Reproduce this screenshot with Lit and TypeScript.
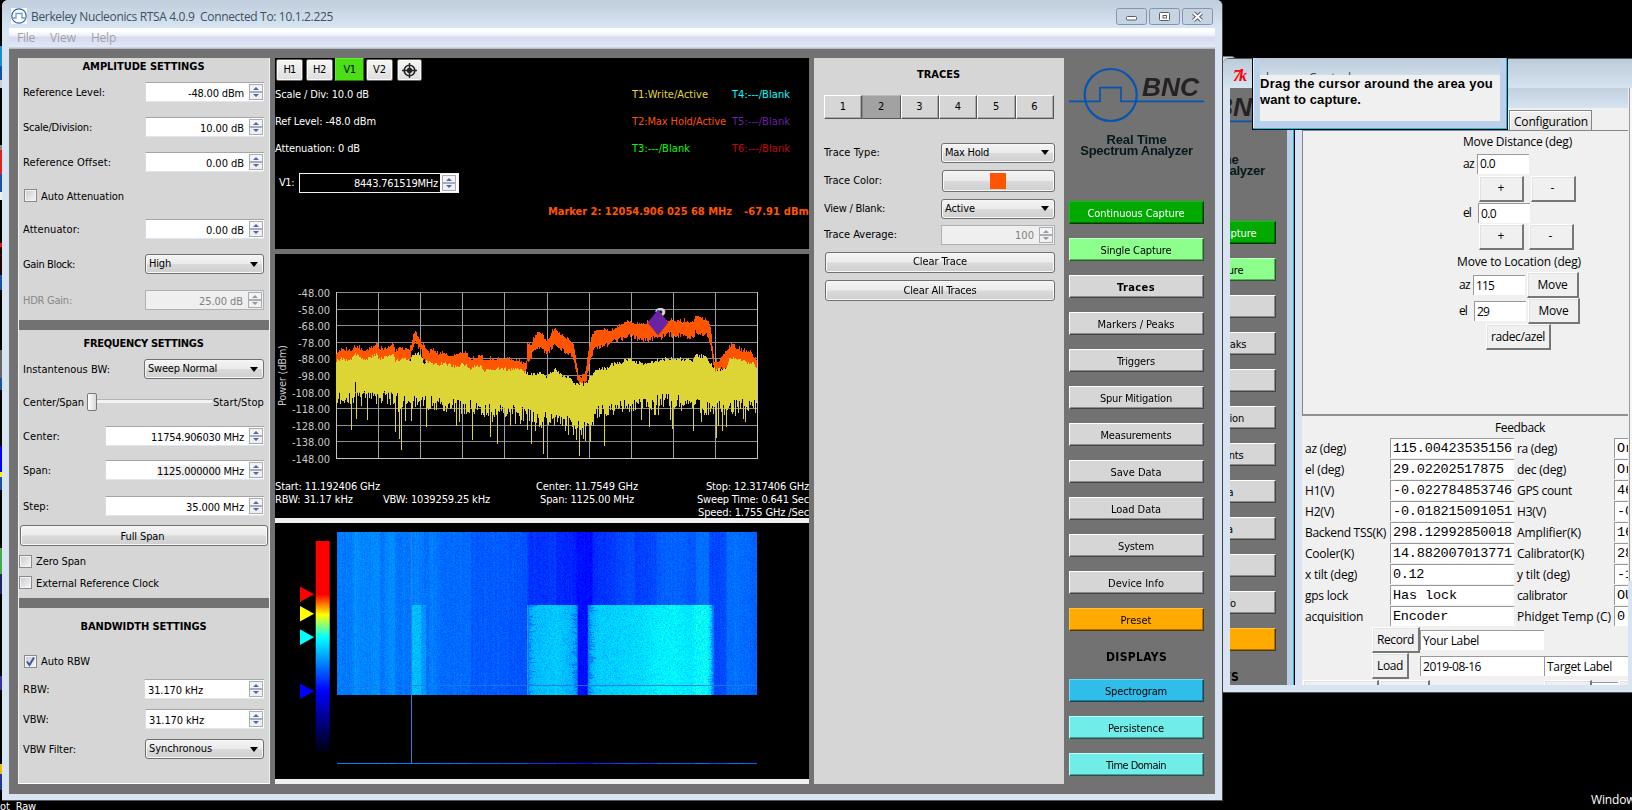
import { LitElement, html, css, svg, nothing } from "lit";
import { customElement } from "lit/decorators.js";

/* ---------- text helpers ---------- */

const FONTS: Record<string, string> = {
  ui: '11px "DejaVu Sans Condensed", "DejaVu Sans", sans-serif',
  uib: 'bold 11px "DejaVu Sans Condensed", "DejaVu Sans", sans-serif',
  cap12: 'bold 12px "DejaVu Sans Condensed", "DejaVu Sans", sans-serif',
  seg: '12px "Open Sans", sans-serif',
  mono: '13.5px "Liberation Mono", monospace',
  ari: 'bold 13px "Liberation Sans", sans-serif',
};
const ctx = document.createElement("canvas").getContext("2d")!;
const spacing = (text: string, w: number, font: string) => {
  ctx.font = FONTS[font];
  return ((w - ctx.measureText(text).width) / text.length).toFixed(3);
};
const t = (text: string, w: number, font = "ui", cls = "") =>
  html`<span class="t ${font} ${cls}" style="letter-spacing:${spacing(text, w, font)}px">${text}</span>`;

const shared = css`
  * { box-sizing: border-box; }
  .t { white-space: pre; line-height: 14px; flex: none; }
  .ui { font: 11px "DejaVu Sans Condensed", "DejaVu Sans", sans-serif; line-height: 14px; }
  .uib { font: bold 11px "DejaVu Sans Condensed", "DejaVu Sans", sans-serif; line-height: 14px; }
  .cap12 { font: bold 12px "DejaVu Sans Condensed", "DejaVu Sans", sans-serif; line-height: 14px; }
  .seg { font: 12px "Open Sans", sans-serif; line-height: 14px; }
  .mono { font: 13.5px "Liberation Mono", monospace; line-height: 14px; }
  .ari { font: bold 13px "Liberation Sans", sans-serif; line-height: 14px; }
`;

/* ---------- deterministic noise ---------- */

const rng = (seed: number) => () => {
  seed = (seed * 1664525 + 1013904223) >>> 0;
  return seed / 4294967296;
};
const lerp = (pts: number[], x: number) => {
  if (x <= pts[0]) return pts[1];
  for (let i = 2; i < pts.length; i += 2)
    if (x <= pts[i]) {
      const f = (x - pts[i - 2]) / (pts[i] - pts[i - 2]);
      return pts[i - 1] + f * (pts[i + 1] - pts[i - 1]);
    }
  return pts[pts.length - 1];
};
/* envelopes use a fine frequency axis (2.851 units per pixel) and 3 level units per pixel */
const KX = 2.851;
const maxTop = [189,280,200,268,235,270,240,255,270,272,290,264,306,247,312,268,330,267,350,250,358,274,372,263,398,268,403,252,410,222,415,214,425,235,437,258,447,264,455,277,465,267,480,282,495,276,510,288,530,282,558,275,565,292,580,297,600,284,610,298,640,297,665,295,700,300,725,310,731,306,734,245,745,255,750,235,765,213,780,222,785,242,795,235,805,212,815,206,825,220,840,228,850,237,860,242,868,270,875,312,880,346,890,350,900,338,905,290,912,252,918,225,930,207,950,207,975,210,990,200,1010,186,1030,181,1040,192,1060,188,1090,192,1110,185,1130,180,1150,180,1170,183,1200,186,1208,196,1212,174,1220,164,1235,177,1250,182,1256,198,1260,240,1266,308,1280,302,1290,287,1300,272,1320,250,1330,264,1350,272,1368,272,1380,290,1387,297];
const maxBottom = [189,320,398,310,403,268,415,246,430,266,445,310,470,330,730,340,735,300,745,290,750,265,770,255,790,280,800,265,815,255,835,268,855,278,865,292,870,320,880,362,890,372,900,362,908,330,915,290,925,260,945,256,970,245,1000,233,1030,225,1050,236,1080,238,1100,230,1115,230,1125,220,1160,223,1185,223,1208,233,1212,216,1225,216,1245,223,1255,245,1262,300,1270,322,1290,325,1387,322];
const writeTop = [189,304,200,295,230,299,240,280,255,290,275,299,303,279,312,297,350,280,358,302,380,292,400,302,405,278,430,280,440,310,450,302,480,312,500,308,530,320,555,310,570,325,600,314,610,330,650,326,690,326,725,333,740,345,770,339,785,350,800,337,815,325,830,342,850,350,870,368,900,372,910,358,930,325,960,324,980,310,1000,306,1030,295,1045,307,1080,310,1095,302,1130,294,1180,297,1208,299,1216,283,1240,290,1255,307,1270,330,1300,325,1310,297,1330,292,1350,303,1380,310,1387,322];
const writeBottom = [189,422,300,414,400,428,500,438,600,450,700,460,740,472,780,482,850,485,880,497,915,497,930,460,1000,445,1100,426,1200,434,1260,452,1387,438];
const spikes = [233,510,244,365,277,480,358,515,369,537,374,570,404,482,447,500,531,498,577,540,628,530,648,551,745,551,780,581,883,587,913,545,953,557,1082,500,1148,507,1207,513,1273,533,1290,512,1355,485];

const traces = () => {
  const r = rng(77);
  let hold = "";
  let write = "";
  for (let px = 0; px <= 420; px++) {
    const X = (px + 66.5) * KX;
    const x = px + 61.5;
    const ot = lerp(maxTop, X) - r() * r() * 15 + 4;
    const ob = Math.max(ot + 16, lerp(maxBottom, X) + (r() - 0.3) * 16);
    hold += `M${x} ${Math.round(6 + ot / 3)}V${Math.round(6 + ob / 3)}`;
    const wt = lerp(writeTop, X) + (r() - 0.4) * 11;
    let wb = lerp(writeBottom, X) + (r() - 0.58) * 44;
    if (r() < 0.14) wb += 20 + r() * 24;
    for (let i = 0; i < spikes.length; i += 2) if (Math.abs(spikes[i] - X) < KX / 2) wb = spikes[i + 1];
    write += `M${x} ${Math.round(6 + wt / 3)}V${Math.round(6 + wb / 3)}`;
  }
  return { hold, write };
};
const TR = traces();

const floor = [191,124,235,124,242,147,255,132,290,134,308,142,316,118,340,142,353,144,357,117,400,120,415,130,445,110,460,128,490,108,570,108,575,90,640,93,700,86,732,80,737,48,770,50,812,58,816,38,865,35,872,16,915,10,922,45,960,52,1010,75,1035,80,1040,62,1095,70,1105,88,1150,100,1205,88,1212,92,1216,112,1248,110,1254,68,1298,76,1303,108,1330,115,1340,104,1370,104,1388,92];
const hot = [402,0,405,195,428,185,432,150,443,150,445,0,729,0,731,165,760,190,800,198,815,205,850,185,874,165,877,0,903,0,906,165,930,205,1000,212,1060,222,1100,238,1150,244,1200,232,1213,250,1245,250,1255,215,1263,160,1265,0];

/* ---------- vertical navigation ---------- */

@customElement("nav-bar")
class NavBar extends LitElement {
  static styles = [shared, css`
    :host { display: flex; flex-direction: column; width: 151px; height: 744px; background: #727272; padding-left: 5px; }
    svg { display: block; width: 146px; height: 76px; margin-top: 7px; flex: none; }
    .cap { display: flex; flex-direction: column; align-items: center; width: 135px; height: 68px; padding-top: 1px; color: #06191a; }
    .cap .t { line-height: 11px; }
    .btns { display: flex; flex-direction: column; gap: 14px; }
    .b { width: 135px; height: 23px; display: flex; align-items: center; justify-content: center; padding: 2px 1px 0 0;
      background: #d6d6d6; color: #000; border: 1px solid #fff; border-right-color: #444; border-bottom-color: #444;
      box-shadow: inset -1px -1px #8c8c8c; }
    .cc { background: #0a0; color: #fff; border-color: #0c0 #003c00 #003c00 #0c0; box-shadow: inset -1px -1px #007000; }
    .sc { background: #8cff8c; border-color: #c4ffc4 #295a29 #295a29 #c4ffc4; box-shadow: inset -1px -1px #58b058; }
    .pr { background: #fa0; border-color: #ffc23a #553800 #553800 #ffc23a; box-shadow: inset -1px -1px #a87000; }
    .sp { background: #30bde9; border-color: #6fd8f6 #104858 #104858 #6fd8f6; box-shadow: inset -1px -1px #1c7d9c; }
    .cy { background: #70ede9; border-color: #b8fffc #265250 #265250 #b8fffc; box-shadow: inset -1px -1px #489e9b; }
    .disp { height: 48px; width: 135px; display: flex; align-items: center; justify-content: center; padding-top: 3px; }
    .bnc { font: italic bold 26px "Liberation Sans", sans-serif; fill: #262122; }
  `];
  render() {
    const b = (s: string, w: number, c = "", f = "ui") => html`<div class="b ${c}">${t(s, w, f)}</div>`;
    return html`
      <svg viewBox="0 0 146 76" fill="none" stroke="#0755b0">
        <circle cx="41.7" cy="38" r="26" stroke-width="2.2" />
        <path d="M0 44.3H31V30.6H52V44.3H135" stroke-width="1.7" />
        <text class="bnc" x="73" y="39" textLength="57" lengthAdjust="spacingAndGlyphs" stroke="none">BNC</text>
      </svg>
      <div class="cap">${t("Real Time", 60, "ari")}${t("Spectrum Analyzer", 113, "ari")}</div>
      <div class="btns">
        ${b("Continuous Capture", 97, "cc")}${b("Single Capture", 71, "sc")}${b("Traces", 38, "", "uib")}
        ${b("Markers / Peaks", 77)}${b("Triggers", 38)}${b("Spur Mitigation", 72)}${b("Measurements", 71)}
        ${b("Save Data", 51)}${b("Load Data", 50)}${b("System", 36)}${b("Device Info", 56)}${b("Preset", 31, "pr")}
      </div>
      <div class="disp">${t("DISPLAYS", 61, "cap12")}</div>
      <div class="btns">${b("Spectrogram", 62, "sp")}${b("Persistence", 56, "cy")}${b("Time Domain", 60, "cy")}</div>
    `;
  }
}

/* ---------- waterfall ---------- */

@customElement("water-fall")
class WaterFall extends LitElement {
  static styles = css`
    :host { display: block; width: 420px; height: 232px; }
    canvas { display: block; }
  `;
  render() {
    return html`<canvas width="420" height="232"></canvas>`;
  }
  firstUpdated() {
    const c = this.renderRoot.querySelector("canvas")!.getContext("2d")!;
    const img = c.createImageData(420, 232);
    const r = rng(5);
    const col = Array.from({ length: 420 }, () => (r() - 0.5) * 12);
    const put = (x: number, y: number, v: number) => {
      const o = (y * 420 + x) * 4;
      img.data[o] = v > 255 ? (v - 255) * 4 : 0;
      img.data[o + 1] = Math.min(255, Math.max(0, v));
      img.data[o + 2] = v > 255 ? 255 - (v - 255) * 4 : v < 0 ? 255 + v * 2 : 255;
      img.data[o + 3] = 255;
    };
    for (let y = 0; y < 163; y++) {
      const j = [0, 0, 0, 0].map(() => r() * r() * 26);
      for (let x = 0; x < 420; x++) {
        const X = (x + 67) * KX;
        let v = lerp(floor, X) + col[x] + (r() - 0.5) * 34;
        if (y >= 73) {
          const h = lerp(hot, X);
          const edge = (X > 734 && X < 736 + j[0]) || (X < 876 && X > 874 - j[1]) || (X > 904 && X < 908 + j[2]) || (X < 1263 && X > 1261 - j[3] * 0.6);
          if (h > 30) v = edge ? h * 0.5 + 20 + r() * 40 : h + (r() - 0.5) * 38 - (r() < 0.09 ? 28 : 0);
        }
        put(x, y, v);
      }
    }
    for (let x = 0; x < 420; x++) put(x, 231, lerp(floor, (x + 67) * KX) + (r() - 0.5) * 24);
    c.putImageData(img, 0, 0);
    c.fillStyle = "#2e7edb";
    c.fillRect(74, 0, 1, 232);
    c.fillStyle = "rgba(40,120,210,.85)";
    c.fillRect(0, 153, 420, 1);
  }
}

/* ---------- application ---------- */

@customElement("app-root")
class AppRoot extends LitElement {
  static styles = [shared, css`
    :host { display: block; position: relative; width: 1632px; height: 810px; background: #000; overflow: hidden; color: #000; }
    .strip { position: absolute; left: 0; top: 0; width: 2px; height: 810px;
      background: linear-gradient(#000 0 46px, #1a8fd0 46px 66px, #1452a0 66px 80px, #ccd 80px 88px, #000 88px 145px, #888 145px 150px, #d22 150px 174px, #1d4fa0 174px 192px, #eee 192px 200px, #000 200px 243px, #e10 243px 247px, #200 247px 275px, #1850a8 275px 290px, #000 290px 350px, #666 350px 378px, #1850a8 378px 390px, #000 390px 446px, #00f 446px 472px, #fe0 472px 477px, #1850a8 477px 490px, #000 490px 548px, #4a4 548px 574px, #226 574px 594px, #000 594px 676px, #339 676px 690px, #000 690px 764px, #eb0 764px 774px, #239 774px 790px, #000 790px); }
    .desk { position: absolute; color: #fff; display: flex; overflow: hidden; }
    .d1 { left: 0; top: 800px; height: 10px; width: 60px; }
    .d2 { left: 1591px; top: 793px; width: 41px; }

    /* main window */
    .win { position: absolute; left: 2px; top: 0; width: 1221px; height: 801px; display: flex; flex-direction: column;
      background: #d8e4f1; border-right: 1px solid #444; border-bottom: 1px solid #555; border-radius: 6px 6px 0 0; overflow: hidden; padding: 0 7px 7px 7px; }
    .tb { height: 28px; margin: 0 -7px; padding: 0 8px 0 9px; flex: none; display: flex; align-items: center; color: #40505e;
      background: linear-gradient(#bfcddc, #d8e5f2); }
    .tb svg.ic { width: 16px; height: 16px; margin: 3px 4px 0 0; background: #fff; }
    .tb .t { margin-top: 6px; flex: 1; }
    .wb { display: flex; gap: 2px; padding-top: 4px; margin-right: 1px; }
    .wb svg { width: 31px; height: 17px; display: block; }
    .menu { height: 21px; flex: none; display: flex; align-items: center; padding: 0 0 1px 8px; color: #a0a0a4;
      background: linear-gradient(#fff 0 3px, #eceef8 8px, #d5daf0 9px, #e2e8f6 19px, #b7bccb 20px); }
    .menu .t { margin-right: 15px; }
    .body { flex: 1; background: #727272; display: grid; grid-template-columns: 252px 5px 534px 5px 250px 151px; padding: 9px 0 0 9px; }
    .nb { margin-top: -8px; }
    .panel { background: #d6d6d6; height: 726px; }
    .left { border-left: 1px solid #eef3f8; border-right: 1px solid #eef3f8; border-bottom: 1px solid #fff; }
    .left .t { padding-top: 2px; }
    .sep { background: #727272; }
    .g { display: grid; }
    .g1 { grid-template-rows: 16px 36px 34px 36px 31px 36px 34px 37px; height: 262px; }
    .g2 { grid-template-rows: 26px 26px 40px 28px 40px 31px 29px 22px 21px; height: 268px; }
    .g3 { grid-template-rows: 36px 34px 22px 38px 22px; height: 175px; }
    .bar { height: 10px; background: #727272; margin: 0; }
    .h { display: flex; align-items: center; justify-content: center; padding-right: 1px; }
    .row { display: flex; align-items: center; padding: 0 5px 0 4px; justify-content: space-between; min-width: 0; }
    .row.start { padding-left: 5px; }
    .row.start.n { padding-left: 0; }
    .start { justify-content: flex-start; }
    .dim { color: #888; }

    .sb { height: 20px; display: flex; align-items: center; justify-content: flex-end; background: #fff; padding: 0 1px 0 3px;
      border-top: 1px solid #a4a6aa; border-bottom: 1px solid #dfe6ef; border-left: 1px solid #d8dce2; }
    .sb .t { margin: 2px 5px 0 0; }
    .sb.la .t { margin-right: auto; }
    .sb svg { width: 14px; height: 16px; flex: none; display: block; }
    .sb.off { background: #efefef; border: 1px solid #b0b0b0; color: #808080; }
    .w115 { width: 114px; } .w119 { width: 119px; } .w120 { width: 120px; } .w159 { width: 159px; } .w113 { width: 113px; }
    .hl { background: #f0f0f0; }
    .cb { height: 20px; border: 1px solid #707070; border-radius: 3px; display: flex; align-items: center; justify-content: space-between; padding: 0 5px 0 3px;
      background: linear-gradient(#f4f4f4, #ebebeb 48%, #dadada 52%, #cfcfcf); box-shadow: inset 0 0 0 1px #f8f8f8; }
    .left .cb .t { padding-top: 0; }
    .cb svg { width: 8px; height: 5px; display: block; }
    .bt { border: 1px solid #707070; border-radius: 3px; display: flex; align-items: center; justify-content: center; flex: none;
      background: linear-gradient(#f4f4f4, #ebebeb 48%, #dadada 52%, #cfcfcf); box-shadow: inset 0 0 0 1px #f8f8f8; }
    .full { height: 21px; width: 248px; margin: 0 0 0 -3px; padding-right: 3px; }
    .ck { width: 13px; height: 13px; border: 1px solid #8a8a8a; background: linear-gradient(135deg, #c8ccd0, #f6f6f6); box-shadow: inset 0 0 0 1px #f4f4f4; margin-right: 4px; flex: none; }
    .ck svg { display: block; width: 11px; height: 11px; }
    .slider { display: flex; align-items: center; flex: 1; margin: 0 1px 0 3px; }
    .thumb { width: 10px; height: 18px; border: 1px solid #777; border-radius: 2px; background: linear-gradient(90deg, #fff, #d8d8d8); flex: none; }
    .track { flex: 1; height: 4px; border-top: 1px solid #b4b4b4; background: #f2f2f2; margin-top: -2px; }

    /* centre */
    .mid { display: grid; grid-template-rows: 191px 5px 264px 5px 256px 5px; color: #fff; height: 726px; }
    .blk { background: #000; }
    .lt { background: #f0f0f0; }
    .tog { display: flex; gap: 3px; padding-left: 1px; height: 23px; }
    .tg { height: 22px; width: 27px; margin-top: 1px; color: #000; border: 1px solid #666; border-radius: 2px; background: linear-gradient(#f6f6f6, #ddd); box-shadow: inset 0 0 0 1px #fafafa; display: flex; align-items: center; justify-content: center; }
    .tg.on { background: #4be016; border-radius: 0; border: 1px solid #5cf028; border-right-color: #237a08; border-bottom-color: #237a08; box-shadow: none; margin: 0 -1px; height: 23px; width: 29px; }
    .tg.x { width: 25px; margin-left: 1px; }
    .tg svg { width: 17px; height: 17px; display: block; flex: none; }
    .lines { display: grid; grid-template-columns: 357px 100px 1fr; grid-auto-rows: 27px; align-items: center; }
    .c1 { color: #e0d838; } .c2 { color: #ff5500; } .c3 { color: #0f0; } .c4 { color: #0ff; } .c5 { color: #6b21a8; } .c6 { color: #c80014; }
    .v1 { display: flex; align-items: center; height: 20px; margin-top: 11px; padding-left: 4px; gap: 5px; }
    .v1 .in { width: 160px; height: 20px; border: 1px solid #f0f0f0; display: flex; align-items: center; justify-content: flex-end; gap: 2px; }
    .v1 .in .t { padding-top: 2px; }
    .v1 .in svg { width: 18px; height: 18px; background: #fff; padding: 1px 2px; }
    .mk { display: flex; justify-content: flex-end; gap: 12px; color: #ff5500; margin-top: 12px; }
    .plot { width: 534px; height: 224px; display: block; }
    .plot text { font: 11px "DejaVu Sans Condensed", "DejaVu Sans", sans-serif; fill: #c8c8c8; }
    .plot .two { font: bold 21px "Liberation Sans", sans-serif; fill: #d8d8d8; }
    .info { display: grid; grid-template-columns: 108px 121px 1fr 150px; grid-auto-rows: 13px; align-items: center; margin-top: 2px; }
    .info .e { text-align: right; justify-self: end; }
    .info .m { justify-self: center; margin-left: 11px; }
    .sg { display: flex; padding: 9px 0 0 25px; }
    .sg svg { width: 37px; height: 232px; display: block; }

    /* traces panel */
    .tr { display: grid; grid-template-rows: 32px 33px 16px 27px 29px 27px 26px 28px; grid-auto-rows: 29px; align-content: start; }
    .tr .h { padding-top: 1px; }
    .tabs { display: flex; width: 230px; height: 24px; margin: 5px 0 0 10px; }
    .tab { flex: 1; display: flex; align-items: center; justify-content: center; border: 1px solid #fff; border-right: 1px solid #555; border-bottom: 1px solid #555; box-shadow: inset -1px -1px #aaa; }
    .tab.sel { background: #a2a2a2; border-left-color: #888; border-top-color: #bbb; box-shadow: none; }
    .tr .row { padding: 0 9px 0 10px; }
    .sw { width: 16px; height: 16px; background: #ff5500; margin-right: 2px; }
    .tb2 { height: 21px; width: 230px; margin-left: 11px; align-self: center; }
    .col { height: 22px; }

    /* right window */
    .tail { position: absolute; left: 1223px; top: 56px; width: 13px; height: 10px; background: #ccd9e6; border-top: 1px solid #777; border-radius: 0 5px 0 0; }
    .rw { position: absolute; left: 1223px; top: 58px; width: 409px; height: 635px; background: #d8e4f1; border-top: 1px solid #555; border-bottom: 1px solid #555; border-radius: 6px 0 0 0; display: flex; flex-direction: column; overflow: hidden; }
    .rt { height: 29px; background: linear-gradient(#bccbda, #d6e3f0); flex: none; display: flex; align-items: center; padding: 5px 0 0 10px; }
    .tk { font: italic bold 16px "Liberation Serif", serif; color: #f00; letter-spacing: -2px; line-height: 16px; }
    .rb { height: 597px; display: grid; grid-template-columns: 57px 15px 326px 4px; padding-left: 7px; }
    .clip { overflow: hidden; }
    .clip nav-bar { margin: -18px 0 0 -94px; }
    .edge { background: linear-gradient(90deg, #b7d0e8 0 6px, #22b8e0 6px 7px, #000 7px 8px, #d8e4f1 8px); }
    .rc { background: #f0f0f0; overflow: hidden; display: flex; flex-direction: column; }
    .scr { background: linear-gradient(90deg, #f0f0f0 0 1px, #999 1px 2px, #f7f7f7 2px); height: 493px; }
    .stb { height: 20px; background: linear-gradient(#c2d0de, #d6e3f0); flex: none; }
    .ctabs { height: 23px; padding: 2px 0 0 207px; border-bottom: 1px solid #85868c; flex: none; }
    .ct { width: 83px; height: 20px; border: 1px solid #85868c; border-bottom: 0; display: flex; align-items: center; padding: 2px 0 0 4px; background: linear-gradient(#f2f2f2, #e4e4e4); box-shadow: inset 1px 1px #fff; }
    .frame { height: 285px; border-left: 1px solid #85868c; border-bottom: 2px solid #909196; display: grid; grid-template-rows: 22px 21px 29px 20px 27px 22px 26px 26px 26px; align-content: start; flex: none; }
    .fr { display: flex; align-items: center; }
    .fr.dn { padding-top: 2px; }
    .en { background: #fff; height: 20px; border-left: 1px solid #999; border-top: 1px solid #999; display: flex; align-items: center; padding: 0 0 0 2px; overflow: hidden; flex: none; }
    .e52 { width: 52px; } .e124 { width: 124px; } .e16 { width: 16px; } .e84 { width: 84px; }
    .tkb { height: 26px; border: 1px solid #fff; border-right: 2px solid #777; border-bottom: 2px solid #777; box-shadow: inset 1px 1px #e2e2e2; display: flex; align-items: center; justify-content: center; flex: none; }
    .k45 { width: 45px; } .k52 { width: 52px; } .k65 { width: 65px; } .k48 { width: 48px; } .k37 { width: 37px; }
    .p161 { padding-left: 160px; } .p157 { padding-left: 156px; } .p177 { padding-left: 176px; } .p155 { padding-left: 154px; } .p184 { padding-left: 183px; }
    .sp { flex: none; width: 3px; } .s7 { flex: none; width: 7px; } .s2 { flex: none; width: 2px; } .s5 { flex: none; width: 5px; } .s11 { flex: none; width: 11px; }
    .fbh { display: flex; height: 22px; align-items: center; padding: 2px 0 0 193px; flex: none; }
    .fb { display: grid; grid-template-columns: 88px 124px 100px 16px; grid-auto-rows: 21px; align-items: center; flex: none; }
    .fb > .seg { margin: 1px 0 0 3px; }
    .fb > .en { align-self: start; padding-top: 1px; }
    .rec { display: flex; padding-left: 70px; align-items: center; height: 26px; flex: none; }
    .stubs { display: flex; height: 6px; padding: 1px 0 0 1px; flex: none; }
    .stub { flex: none; border-top: 1px solid #fff; border-left: 1px solid #fff; border-right: 2px solid #777; height: 8px; box-shadow: inset 1px 1px #e2e2e2; }
    .q1 { width: 76px; } .q2 { width: 50px; margin: 0 114px 0 1px; } .q3 { width: 48px; }
    .q4 { width: 26px; height: 6px; margin-top: 2px; border-top: 1px solid #999; background: #fff; flex: none; }
    .q5 { width: 12px; margin-left: 1px; border-right: 0; }

    /* capture hint */
    .hint { position: absolute; left: 1252px; top: 58px; width: 256px; height: 72px; background: #b9d1ea; border: 1px solid #000; border-top: 0; box-shadow: inset -1px -1px #12c0e6, inset 1px 0 #e8f2fa; padding: 0 7px 8px 7px; display: flex; flex-direction: column; }
    .hh { height: 17px; flex: none; overflow: hidden; background: linear-gradient(#bccbda, #cfdce9); display: flex; color: #444; padding: 13px 0 0 6px; gap: 39px; }
    .hb { flex: 1; background: #f0f0f0; display: flex; flex-direction: column; padding-top: 1px; }
    .hb .t { line-height: 16px; }
  `];

  spin(off = false) {
    const c = off ? "#999" : "#4a68b4";
    return svg`<svg viewBox="0 0 14 16"><rect x=".5" y=".5" width="13" height="7" fill="#f4f4f4" stroke="#a8adb5"/><rect x=".5" y="8.5" width="13" height="7" fill="#f0f0f0" stroke="#a8adb5"/><path d="M4 6L7 3L10 6ZM4 10H10L7 13Z" fill="${c}"/></svg>`;
  }
  sb(s: string, w: number, cls: string, off = false) {
    return html`<div class="sb ${cls} ${off ? "off" : ""}">${t(s, w)}${this.spin(off)}</div>`;
  }
  cb(s: string, w: number, cls: string) {
    return html`<div class="cb ${cls}">${t(s, w)}<svg viewBox="0 0 8 5"><path d="M0 0H8L4 5Z" /></svg></div>`;
  }
  ck(on = false) {
    return html`<div class="ck">${on ? svg`<svg viewBox="0 0 11 11"><path d="M2 5.5L4.5 9L9 1.5" fill="none" stroke="#3a55a4" stroke-width="2"/></svg>` : nothing}</div>`;
  }
  row(l: string, w: number, c: unknown, cls = "") {
    return html`<div class="row ${cls}">${t(l, w)}${c}</div>`;
  }

  left() {
    return html`<div class="panel left">
      <div class="g g1">
        <div class="h">${t("AMPLITUDE SETTINGS", 122, "uib")}</div>
        ${this.row("Reference Level:", 82, this.sb("-48.00 dBm", 56, "w119"))}
        ${this.row("Scale/Division:", 69, this.sb("10.00 dB", 44, "w119"))}
        ${this.row("Reference Offset:", 88, this.sb("0.00 dB", 38, "w119"))}
        <div class="row start">${this.ck()}${t("Auto Attenuation", 83)}</div>
        ${this.row("Attenuator:", 57, this.sb("0.00 dB", 38, "w119"))}
        ${this.row("Gain Block:", 52, this.cb("High", 22, "w119"))}
        ${this.row("HDR Gain:", 49, this.sb("25.00 dB", 44, "w119", true), "dim")}
      </div>
      <div class="bar"></div>
      <div class="g g2">
        <div class="h">${t("FREQUENCY SETTINGS", 120, "uib")}</div>
        ${this.row("Instantenous BW:", 87, this.cb("Sweep Normal", 69, "w120"))}
        <div class="row">${t("Center/Span", 61)}<div class="slider"><div class="thumb"></div><div class="track"></div></div>${t("Start/Stop", 51)}</div>
        ${this.row("Center:", 37, this.sb("11754.906030 MHz", 93, "w159"))}
        <div class="row">${t("Span:", 28)}<div class="sb w159">${html`<span class="t ui" style="letter-spacing:${spacing("1125.000000 MHz", 87, "ui")}px"><span class="hl">1125.000000</span> MHz</span>`}${this.spin()}</div></div>
        ${this.row("Step:", 26, this.sb("35.000 MHz", 58, "w159"))}
        <div class="row"><div class="bt full">${t("Full Span", 44)}</div></div>
        <div class="row n start">${this.ck()}${t("Zero Span", 50)}</div>
        <div class="row n start">${this.ck()}${t("External Reference Clock", 123)}</div>
      </div>
      <div class="bar"></div>
      <div class="g g3">
        <div class="h">${t("BANDWIDTH SETTINGS", 126, "uib")}</div>
        <div class="row start">${this.ck(true)}${t("Auto RBW", 49)}</div>
        ${this.row("RBW:", 27, this.sb("31.170 kHz", 55, "w120 la"))}
        ${this.row("VBW:", 26, this.sb("31.170 kHz", 55, "w119 la"))}
        ${this.row("VBW Filter:", 53, this.cb("Synchronous", 63, "w119"))}
      </div>
    </div>`;
  }

  plot() {
    const ys = Array.from({ length: 11 }, (_, i) => Math.round(38 + i * 16.6) + 0.5);
    const xs = Array.from({ length: 11 }, (_, i) => Math.round(61 + i * 42.1) + 0.5);
    return html`<svg class="plot" viewBox="0 0 534 224">
      <g shape-rendering="crispEdges" fill="none">
        ${ys.map((y) => svg`<path d="M61 ${y}H483" stroke="#8c8c8c"/>`)}
        ${xs.map((x) => svg`<path d="M${x} 38V205" stroke="#a0a0a4"/>`)}
        <path d="M61.5 38V204.5H482.5V38" stroke="#c4c4c4" />
        <path d="${TR.hold}" stroke="#ff5500" />
        <path d="${TR.write}" stroke="#ddd535" />
      </g>
      ${ys.map((y, i) => {
        const s = `-${48 + i * 10}.00`;
        return svg`<text x="55" y="${y + 4}" text-anchor="end" textLength="${i > 5 ? 38 : 32}">${s}</text>`;
      })}
      <text transform="translate(10.5 152)rotate(-90)" textLength="61">Power (dBm)</text>
      <text class="two" x="379.500" y="67.500">2</text>
      <path d="M383 55.5L393.3 68.5L383 81.5L372.7 68.5Z" fill="#6b23a5" />
    </svg>`;
  }

  mid() {
    return html`<div class="mid">
      <div class="blk">
        <div class="tog">
          <div class="tg">${t("H1", 12)}</div><div class="tg">${t("H2", 13)}</div><div class="tg on">${t("V1", 12)}</div><div class="tg">${t("V2", 13)}</div>
          <div class="tg x"><svg viewBox="0 0 17 17" fill="none" stroke="#222"><circle cx="8.5" cy="8.5" r="5.3" stroke-width="1.6" /><circle cx="8.5" cy="8.5" r="2.4" fill="#222" /><path d="M8.5 1V16M1 8.5H16" stroke-width="1.4" /></svg></div>
        </div>
        <div class="lines">
          ${t("Scale / Div: 10.0 dB", 94)}${t("T1:Write/Active", 76, "ui", "c1")}${t("T4:---/Blank", 58, "ui", "c4")}
          ${t("Ref Level: -48.0 dBm", 101)}${t("T2:Max Hold/Active", 94, "ui", "c2")}${t("T5:---/Blank", 58, "ui", "c5")}
          ${t("Attenuation: 0 dB", 85)}${t("T3:---/Blank", 58, "ui", "c3")}${t("T6:---/Blank", 58, "ui", "c6")}
        </div>
        <div class="v1">${t("V1:", 15)}<div class="in">${t("8443.761519MHz", 84)}${this.spin()}</div></div>
        <div class="mk">${t("Marker 2: 12054.906 025 68 MHz", 184, "uib")}${t("-67.91 dBm", 65, "uib")}</div>
      </div>
      <div class="sep"></div>
      <div class="blk">
        ${this.plot()}
        <div class="info">
          ${t("Start: 11.192406 GHz", 105)}<span></span>${t("Center: 11.7549 GHz", 102, "ui", "m")}${t("Stop: 12.317406 GHz", 103, "ui", "e")}
          ${t("RBW: 31.17 kHz", 78)}${t("VBW: 1039259.25 kHz", 107)}${t("Span: 1125.00 MHz", 94, "ui", "m")}${t("Sweep Time: 0.641 Sec", 112, "ui", "e")}
          <span></span><span></span><span></span>${t("Speed: 1.755 GHz /Sec", 111, "ui", "e")}
        </div>
      </div>
      <div class="lt"></div>
      <div class="blk sg">
        <svg viewBox="0 0 37 232">
          <defs><linearGradient id="lg" x1="0" y1="0" x2="0" y2="1"><stop offset="0" stop-color="red" /><stop offset=".25" stop-color="red" /><stop offset=".345" stop-color="#ff0" /><stop offset=".45" stop-color="#0ff" /><stop offset=".7" stop-color="#00f" /><stop offset="1" /></linearGradient></defs>
          <rect x="15.7" y="9" width="14" height="214" fill="url(#lg)" />
          <path d="M0 54.5V70L14 62.2Z" fill="red" /><path d="M0 74V89.5L14 81.7Z" fill="#ff0" /><path d="M0 97.300V113L14 105.200Z" fill="#0ff" /><path d="M0 151.500V167L14 159.200Z" fill="#00f" />
        </svg>
        <water-fall></water-fall>
      </div>
      <div class="lt"></div>
    </div>`;
  }

  traces() {
    return html`<div class="panel tr">
      <div class="h">${t("TRACES", 43, "uib")}</div>
      <div class="tabs">${[1, 2, 3, 4, 5, 6].map((n) => html`<div class="tab ${n === 2 ? "sel" : ""}">${t(String(n), 7)}</div>`)}</div>
      <div></div>
      ${this.row("Trace Type:", 56, this.cb("Max Hold", 44, "w115"))}
      ${this.row("Trace Color:", 58, html`<div class="bt col w113"><div class="sw"></div></div>`)}
      ${this.row("View / Blank:", 61, this.cb("Active", 30, "w115"))}
      ${this.row("Trace Average:", 73, this.sb("100", 19, "w115", true))}
      <div class="bt tb2">${t("Clear Trace", 54)}</div>
      <div class="bt tb2">${t("Clear All Traces", 73)}</div>
    </div>`;
  }

  right() {
    const k = (s: string, w: number, c: string) => html`<div class="tkb ${c}">${t(s, w, "seg")}</div>`;
    const e = (s: string, w: number, c: string, f = "seg") => html`<div class="en ${c}">${t(s, w, f)}</div>`;
    const fb: [string, number, string, number, string, number, string][] = [
      ["az (deg)", 41, "115.00423535156", 119, "ra (deg)", 40, "Or"],
      ["el (deg)", 39, "29.02202517875", 111, "dec (deg)", 49, "Or"],
      ["H1(V)", 29, "-0.022784853746", 119, "GPS count", 55, "46"],
      ["H2(V)", 29, "-0.018215091051", 119, "H3(V)", 29, "-0"],
      ["Backend TSS(K)", 81, "298.12992850018", 119, "Amplifier(K)", 64, "16"],
      ["Cooler(K)", 49, "14.882007013771", 119, "Calibrator(K)", 67, "28"],
      ["x tilt (deg)", 52, "0.12", 31, "y tilt (deg)", 53, "-1"],
      ["gps lock", 43, "Has lock", 64, "calibrator", 50, "OU"],
      ["acquisition", 58, "Encoder", 55, "Phidget Temp (C)", 94, "0."],
    ];
    return html`<div class="tail"></div><div class="rw">
      <div class="rt"><span class="tk">7k</span></div>
      <div class="rb">
        <div class="clip"><nav-bar></nav-bar></div>
        <div class="edge"></div>
        <div class="rc">
          <div class="stb"></div>
          <div class="ctabs"><div class="ct">${t("Configuration", 74, "seg")}</div></div>
          <div class="frame">
            <div class="fr p161">${t("Move Distance (deg)", 109, "seg")}</div>
            <div class="fr p161">${t("az", 11, "seg")}<i class="sp"></i>${e("0.0", 15, "e52")}</div>
            <div class="fr p177">${k("+", 7, "k45")}<i class="s7"></i>${k("-", 5, "k45")}</div>
            <div class="fr p161">${t("el", 8, "seg")}<i class="s7"></i>${e("0.0", 15, "e52")}</div>
            <div class="fr p177">${k("+", 7, "k45")}<i class="s5"></i>${k("-", 5, "k45")}</div>
            <div class="fr dn p155">${t("Move to Location (deg)", 124, "seg")}</div>
            <div class="fr p157">${t("az", 11, "seg")}<i class="sp"></i>${e("115", 18, "e52")}<i class="s2"></i>${k("Move", 30, "k52")}</div>
            <div class="fr p157">${t("el", 8, "seg")}<i class="s7"></i>${e("29", 12, "e52")}<i class="s2"></i>${k("Move", 30, "k52")}</div>
            <div class="fr p184">${k("radec/azel", 54, "k65")}</div>
          </div>
          <div class="fbh">${t("Feedback", 50, "seg")}</div>
          <div class="fb">
            ${fb.map(([a, w, v, vw, b, bw, c]) => html`${t(a, w, "seg")}${e(v, vw, "e124", "mono")}${t(b, bw, "seg")}${e(c, 16, "e16", "mono")}`)}
          </div>
          <div class="rec">${k("Record", 37, "k48")}${e("Your Label", 56, "e124")}</div>
          <div class="rec">${k("Load", 26, "k37")}<i class="s11"></i>${e("2019-08-16", 58, "e124")}${e("Target Label", 65, "e84")}</div>
          <div class="stubs"><div class="stub q1"></div><div class="stub q2"></div><div class="stub q3"></div><div class="q4"></div><div class="stub q5"></div></div>
        </div>
        <div class="scr"></div>
      </div>
    </div>`;
  }

  render() {
    return html`
      <div class="strip"></div>
      <div class="desk d1">${t("ot  Raw", 36)}</div>
      <div class="desk d2">${t("Windows", 50, "seg")}</div>
      ${this.right()}
      <div class="win">
        <div class="tb">
          <svg class="ic" viewBox="0 0 16 16" fill="none" stroke="#2b62a8"><circle cx="8" cy="8" r="7.2" stroke-width="1.2" /><path d="M1 10H5V5.500H11V10H15" stroke="#6f9bd0" stroke-width="1.300" /></svg>
          ${t("Berkeley Nucleonics RTSA 4.0.9  Connected To: 10.1.2.225", 302, "seg")}
          <div class="wb">${[
            svg`<rect x="10.500" y="8.500" width="10" height="3.500" rx="1" fill="#fff" stroke="#555d6b"/>`,
            svg`<rect x="10.500" y="4.500" width="10" height="8" rx="1" fill="#fff" stroke="#555d6b"/><rect x="14" y="7.500" width="3.500" height="2.500" fill="none" stroke="#555d6b"/>`,
            svg`<path d="M11.500 5L19.500 12.500M19.500 5L11.500 12.500" stroke="#555d6b" stroke-width="4"/><path d="M11.500 5L19.500 12.500M19.500 5L11.500 12.500" stroke="#fff" stroke-width="2"/>`,
          ].map((g) => html`<svg viewBox="0 0 31 17"><rect x=".5" y=".5" width="30" height="16" rx="2" fill="#c6d4e2" stroke="#8594b0" />${g}</svg>`)}</div>
        </div>
        <div class="menu">${t("File", 18, "seg")}${t("View", 26, "seg")}${t("Help", 25, "seg")}</div>
        <div class="body">
          ${this.left()}<div></div>${this.mid()}<div></div>${this.traces()}
          <nav-bar class="nb"></nav-bar>
        </div>
      </div>
      <div class="hint">
        <div class="hh">${t("l", 4, "seg")}${t("Control", 42, "seg")}</div>
        <div class="hb">${t("Drag the cursor around the area you", 233, "ari")}${t("want to capture.", 101, "ari")}</div>
      </div>
    `;
  }
}
